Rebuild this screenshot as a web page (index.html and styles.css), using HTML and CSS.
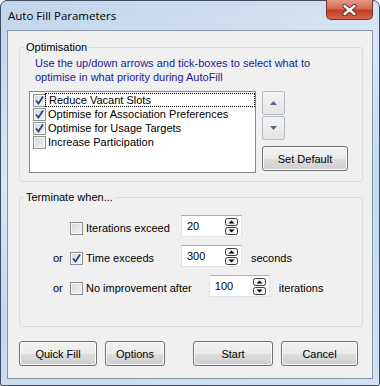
FILE: index.html
```html
<!DOCTYPE html>
<html lang="en">
<head>
  <meta charset="UTF-8" />
  <title>Auto Fill Parameters</title>
  <link rel="stylesheet" href="styles.css">
</head>
<body>
  <div class="window">
    <div class="titlebar">
      <span class="title">Auto Fill Parameters</span>
      <button class="close" aria-label="Close">
        <svg width="15" height="12" viewBox="0 0 15 12">
          <path d="M2.5 2 L12.5 10 M12.5 2 L2.5 10" stroke="#5a2a22" stroke-width="4.2" stroke-linecap="round"/>
          <path d="M2.5 2 L12.5 10 M12.5 2 L2.5 10" stroke="#fff" stroke-width="2.4" stroke-linecap="round"/>
        </svg>
      </button>
    </div>

    <div class="client">
      <fieldset class="group group-opt">
        <legend>Optimisation</legend>
        <p class="hint">Use the up/down arrows and tick-boxes to select what to optimise in what priority during AutoFill</p>
        <div class="opt-body">
          <ul class="listbox">
            <li class="item focus"><span class="check on"><svg width="11" height="11" viewBox="0 0 11 11"><path d="M2 5.5 L4.5 8.5 L9 1.5" fill="none" stroke="#2c3f8c" stroke-width="1.8"/></svg></span>Reduce Vacant Slots</li>
            <li class="item"><span class="check on"><svg width="11" height="11" viewBox="0 0 11 11"><path d="M2 5.5 L4.5 8.5 L9 1.5" fill="none" stroke="#2c3f8c" stroke-width="1.8"/></svg></span>Optimise for Association Preferences</li>
            <li class="item"><span class="check on"><svg width="11" height="11" viewBox="0 0 11 11"><path d="M2 5.5 L4.5 8.5 L9 1.5" fill="none" stroke="#2c3f8c" stroke-width="1.8"/></svg></span>Optimise for Usage Targets</li>
            <li class="item"><span class="check"></span>Increase Participation</li>
          </ul>
          <div class="side">
            <div class="arrows">
              <button class="arrow"><svg width="7" height="4" viewBox="0 0 7 4"><path d="M0 4 L3.5 0 L7 4Z" fill="#5a6488"/></svg></button>
              <button class="arrow"><svg width="7" height="4" viewBox="0 0 7 4"><path d="M0 0 L3.5 4 L7 0Z" fill="#5a6488"/></svg></button>
            </div>
            <button class="btn btn-default">Set Default</button>
          </div>
        </div>
      </fieldset>

      <fieldset class="group group-term">
        <legend>Terminate when...</legend>
        <div class="row">
          <span class="or"></span>
          <span class="check"></span>
          <span class="label">Iterations exceed</span>
          <div class="spin">
            <span class="value">20</span>
            <svg width="13" height="17" viewBox="0 0 13 17"><rect x="0.5" y="0.5" width="12" height="7" rx="2" fill="#f2f2f2" stroke="#3a3a3a"/><path d="M3.5 5.5 L6.5 2.5 L9.5 5.5Z" fill="#000"/><rect x="0.5" y="9.5" width="12" height="7" rx="2" fill="#f2f2f2" stroke="#3a3a3a"/><path d="M3.5 11.5 L6.5 14.5 L9.5 11.5Z" fill="#000"/></svg>
          </div>
        </div>
        <div class="row">
          <span class="or">or</span>
          <span class="check on"><svg width="11" height="11" viewBox="0 0 11 11"><path d="M2 5.5 L4.5 8.5 L9 1.5" fill="none" stroke="#2c3f8c" stroke-width="1.8"/></svg></span>
          <span class="label">Time exceeds</span>
          <div class="spin">
            <span class="value">300</span>
            <svg width="13" height="17" viewBox="0 0 13 17"><rect x="0.5" y="0.5" width="12" height="7" rx="2" fill="#f2f2f2" stroke="#3a3a3a"/><path d="M3.5 5.5 L6.5 2.5 L9.5 5.5Z" fill="#000"/><rect x="0.5" y="9.5" width="12" height="7" rx="2" fill="#f2f2f2" stroke="#3a3a3a"/><path d="M3.5 11.5 L6.5 14.5 L9.5 11.5Z" fill="#000"/></svg>
          </div>
          <span class="unit">seconds</span>
        </div>
        <div class="row">
          <span class="or">or</span>
          <span class="check"></span>
          <span class="label label-wide">No improvement after</span>
          <div class="spin">
            <span class="value">100</span>
            <svg width="13" height="17" viewBox="0 0 13 17"><rect x="0.5" y="0.5" width="12" height="7" rx="2" fill="#f2f2f2" stroke="#3a3a3a"/><path d="M3.5 5.5 L6.5 2.5 L9.5 5.5Z" fill="#000"/><rect x="0.5" y="9.5" width="12" height="7" rx="2" fill="#f2f2f2" stroke="#3a3a3a"/><path d="M3.5 11.5 L6.5 14.5 L9.5 11.5Z" fill="#000"/></svg>
          </div>
          <span class="unit">iterations</span>
        </div>
      </fieldset>

      <div class="actions">
        <button class="btn btn-quick">Quick Fill</button>
        <button class="btn btn-options">Options</button>
        <button class="btn btn-start">Start</button>
        <button class="btn btn-cancel">Cancel</button>
      </div>
    </div>
  </div>
</body>
</html>
```

FILE: styles.css
```css
body {
  margin: 0;
  background: #fff;
  font-family: "Liberation Sans", Arial, sans-serif;
  font-size: 11px;
  color: #000;
}
.window {
  width: 380px;
  height: 386px;
  box-sizing: border-box;
  border: 1px solid #3f4e60;
  border-radius: 7px 7px 2px 2px;
  padding: 0 6px 7px 6px;
  background: linear-gradient(160deg, #c0d4eb 0%, #dae6f3 35%, #c6d9ee 60%, #d3e2f2 100%);
}
.titlebar {
  height: 29px;
  display: flex;
  justify-content: space-between;
  align-items: flex-start;
}
.title {
  font-family: "Open Sans", "Liberation Sans", sans-serif;
  font-size: 11.5px;
  margin: 7px 0 0 1px;
  color: #000;
}
.close {
  width: 47px;
  height: 20px;
  margin: -1px 0 0 0;
  padding: 0;
  border: 1px solid #6b3a33;
  border-top: none;
  border-radius: 0 0 5px 5px;
  background: linear-gradient(to bottom, #e69a86 0%, #d46a52 45%, #c23d24 55%, #d3664b 100%);
  display: flex;
  align-items: center;
  justify-content: center;
}
.client {
  height: 349px;
  box-sizing: border-box;
  border: 1px solid #8394a8;
  background: #f0f0f0;
  padding: 0 9px 0 11px;
}
.group {
  margin: 0;
  border: 1px solid #d5dfe5;
  border-radius: 3px;
  padding: 0;
  min-width: 0;
}
.group legend {
  padding: 0 2px;
  line-height: 13px;
}
.group-opt {
  margin-top: 10px;
  padding: 2px 0 8px 9px;
}
.group-opt legend {
  margin-left: -5px;
}
.hint {
  margin: 0 0 7px 6px;
  line-height: 14px;
  color: #1c1c8e;
  width: 300px;
}
.opt-body {
  display: flex;
  gap: 6px;
}
.listbox {
  list-style: none;
  margin: 0;
  padding: 1px 0 0 0;
  width: 227px;
  height: 82px;
  box-sizing: border-box;
  background: #fff;
  border: 1px solid #828790;
}
.item {
  height: 14px;
  display: flex;
  align-items: center;
  padding-left: 3px;
  white-space: nowrap;
}
.item.focus {
  outline: 1px dotted #000;
  outline-offset: -1px;
  margin-left: 15px;
  padding-left: 0;
}
.item.focus .check {
  margin-left: -12px;
  margin-right: 3px;
}
.item .check {
  margin-right: 2px;
}
.check {
  width: 13px;
  height: 13px;
  box-sizing: border-box;
  border: 1px solid #8e8f8f;
  background: linear-gradient(135deg, #d4d7db 0%, #f4f4f4 100%);
  box-shadow: inset 0 0 0 1px #f6f6f6;
  display: inline-flex;
  align-items: center;
  justify-content: center;
  flex: none;
}
.side {
  display: flex;
  flex-direction: column;
  gap: 6px;
}
.arrows {
  display: flex;
  flex-direction: column;
  gap: 1px;
}
.arrow {
  width: 23px;
  height: 24px;
  padding: 0;
  border: 1px solid #b7bcc4;
  border-radius: 2px;
  background: linear-gradient(to bottom, #f4f4f4, #e4e4e4);
  display: flex;
  align-items: center;
  justify-content: center;
}
.btn {
  height: 25px;
  padding: 0;
  font-family: "Liberation Sans", Arial, sans-serif;
  font-size: 11px;
  color: #000;
  border: 1px solid #707070;
  border-radius: 3px;
  background: linear-gradient(to bottom, #f2f2f2 0%, #ebebeb 50%, #dddddd 50%, #cfcfcf 100%);
  box-shadow: inset 0 0 0 1px #fbfbfb;
}
.btn-default {
  width: 86px;
}
.group-term {
  margin-top: 9px;
  padding: 13px 0 27px 33px;
  display: flex;
  flex-direction: column;
  gap: 8px;
}
.group-term legend {
  margin-left: -29px;
}
.row {
  display: flex;
  align-items: center;
  height: 22px;
}
.or {
  width: 17px;
}
.row .check {
  margin-right: 3px;
}
.label {
  min-width: 95px;
}
.label-wide {
  min-width: 0;
  margin-right: 17px;
}
.spin {
  width: 61px;
  height: 22px;
  margin-bottom: 4px;
  box-sizing: border-box;
  background: #fff;
  border: 1px solid #e2e3ea;
  border-top-color: #abadb3;
  display: flex;
  align-items: center;
  justify-content: space-between;
  padding: 0 3px 0 5px;
}
.unit {
  margin-left: 9px;
}
.actions {
  margin-top: 14px;
  display: flex;
}
.btn-quick {
  width: 78px;
}
.btn-options {
  width: 60px;
  margin-left: 8px;
}
.btn-start {
  width: 80px;
  margin-left: 28px;
}
.btn-cancel {
  width: 77px;
  margin-left: 8px;
}
```
